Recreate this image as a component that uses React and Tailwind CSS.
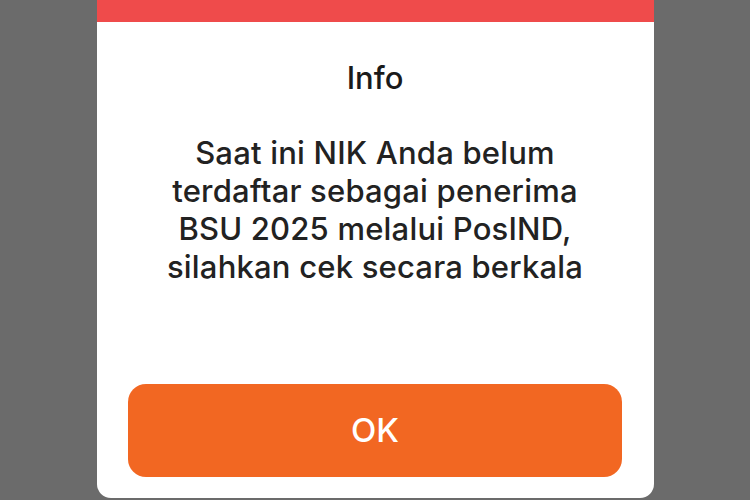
import React from "react";

export default function App() {
    return (
        <div
            className="w-[750px] h-[500px] bg-[#6b6b6b] flex justify-center overflow-hidden"
            style={{ fontFamily: "Inter, 'Noto Sans', sans-serif" }}
        >
            <div className="w-[557px] h-[498px] bg-white rounded-b-[14px] flex flex-col items-center">
                {/* Header bar */}
                <div className="w-full h-[22px] bg-[#ef4b4b]" />

                {/* Title */}
                <h2 className="mt-[38px] text-[31px] leading-[36px] font-medium text-[#1a1a1a]">
                    Info
                </h2>

                {/* Message */}
                <p className="mt-[38px] text-[31px] leading-[38px] font-medium tracking-[0.2px] text-center text-[#222222]">
                    Saat ini NIK Anda belum
                    <br />
                    terdaftar sebagai penerima
                    <br />
                    BSU 2025 melalui PosIND,
                    <br />
                    silahkan cek secara berkala
                </p>

                {/* Action */}
                <button className="mt-[98px] w-[494px] h-[93px] rounded-[18px] bg-[#f26722] text-white text-[33px] font-medium">
                    OK
                </button>
            </div>
        </div>
    );
}
